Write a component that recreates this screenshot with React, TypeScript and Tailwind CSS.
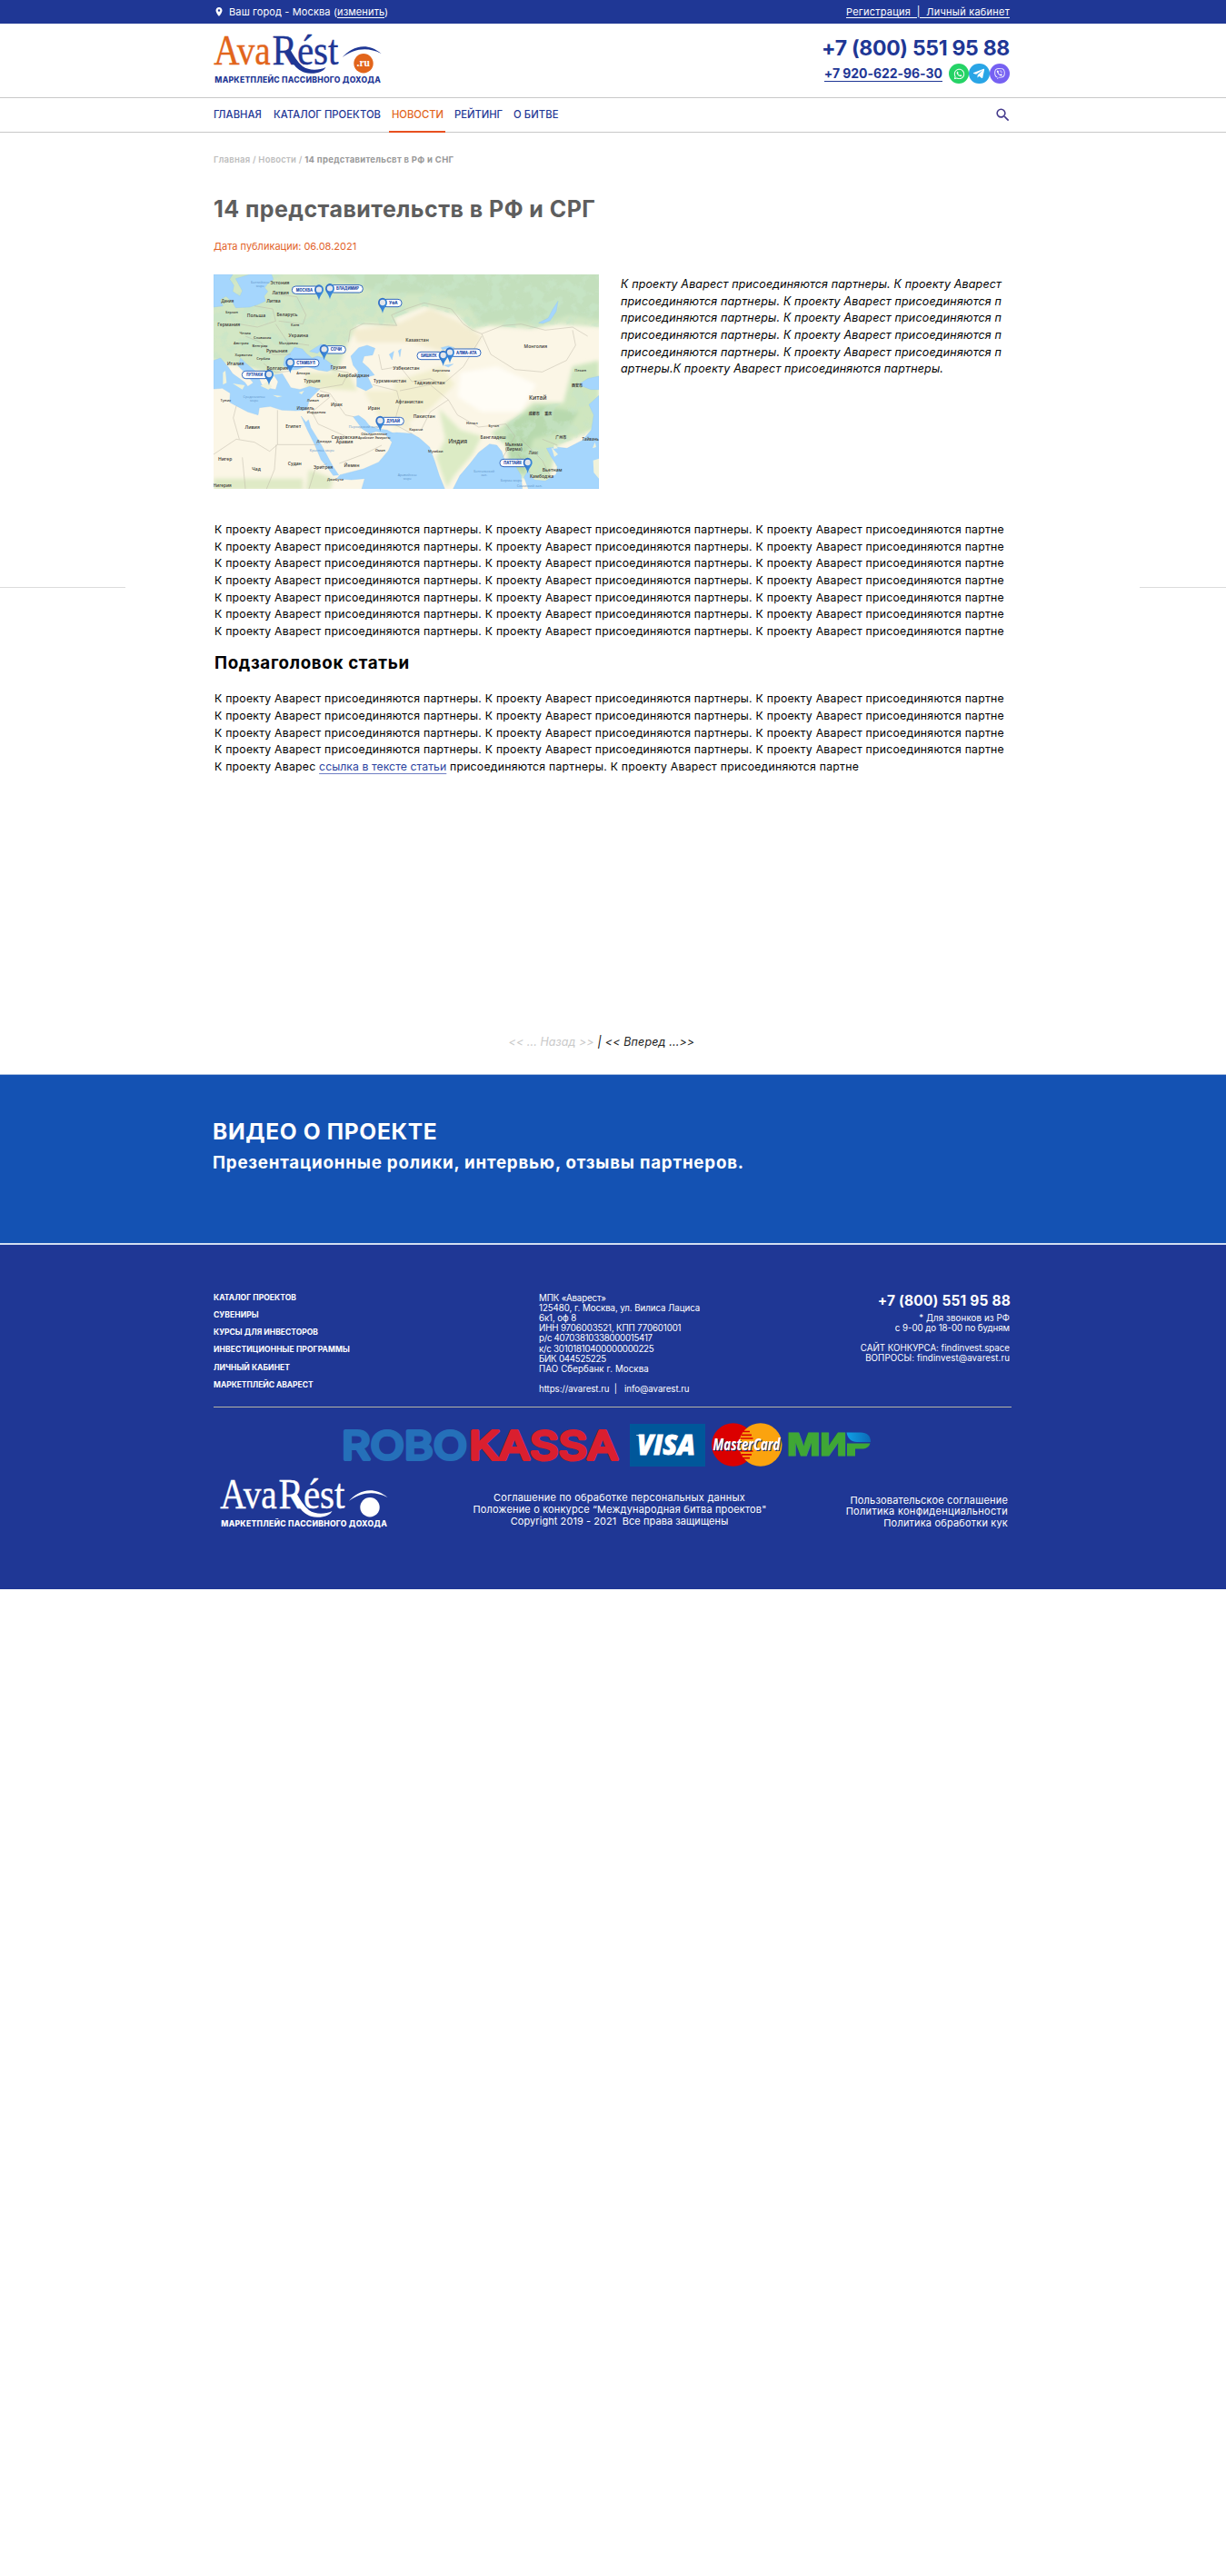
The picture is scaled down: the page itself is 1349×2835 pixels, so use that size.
import React from "react";
import { FaWhatsapp, FaTelegramPlane, FaViber } from "react-icons/fa";
import { MdLocationOn, MdSearch } from "react-icons/md";

function Logo({ mono = false }: { mono?: boolean }) {
  const warm = mono ? "#ffffff" : "#e2651b";
  const cool = mono ? "#ffffff" : "#1f3795";
  return (
    <svg width="190" height="62" viewBox="0 0 190 62" className="block shrink-0 overflow-visible">
      <g fontFamily="'Liberation Serif', serif" fontSize="47">
        <text x="3.2" y="36.7" fill={warm} stroke={warm} strokeWidth="0.4" textLength="62.5" lengthAdjust="spacingAndGlyphs">Ava</text>
        <text x="67.5" y="36.7" fill={cool} stroke={cool} strokeWidth="0.4" textLength="73" lengthAdjust="spacingAndGlyphs">Rést</text>
      </g>
      <path d="M83 21 C88 32 93 46.3 110 46.8 C118 47 124 44.5 126.5 40 C119 43.5 108 44 101 39 C95 34 91 27 87 20Z" fill={cool} />
      <path d="M144.7 28.9 C154 19 170 10.5 187.5 24.9 C172 17 158 19.5 144.7 28.9Z" fill={cool} />
      <circle cx="168" cy="35.7" r="10.7" fill={warm} />
      {!mono && (
        <text x="167.8" y="39" fill="#fff" fontFamily="'Liberation Serif', serif" fontWeight="700" fontSize="11.5" textAnchor="middle">.ru</text>
      )}
      <text x="4.3" y="56.7" fill={cool} fontFamily="Inter, sans-serif" fontWeight="800" fontSize="8.6" textLength="182.500" lengthAdjust="spacing">
        МАРКЕТПЛЕЙС ПАССИВНОГО ДОХОДА
      </text>
    </svg>
  );
}

type Pin = { x: number; y: number; edge: number; name: string };
const pins: Pin[] = [
  { x: 429, y: 383, edge: 538, name: "ВЛАДИМИР" },
  { x: 393, y: 387, edge: 304, name: "МОСКВА" },
  { x: 603, y: 430, edge: 666, name: "УФА" },
  { x: 410, y: 584, edge: 481, name: "СОЧИ" },
  { x: 298, y: 628, edge: 393, name: "СТАМБУЛ" },
  { x: 228, y: 667, edge: 139, name: "ЛУТРАКИ" },
  { x: 825, y: 594, edge: 927, name: "АЛМА-АТА" },
  { x: 803, y: 604, edge: 717, name: "БИШКЕК" },
  { x: 595, y: 820, edge: 673, name: "ДУБАЙ" },
  { x: 1082, y: 958, edge: 990, name: "ПАТТАЙЯ" },
];

type Label = [x: number, y: number, text: string, size?: number];
const places: Label[] = [
  [264, 369, "Эстония"], [266, 402, "Латвия"], [243, 429, "Литва"], [91, 430, "Дания", 13],
  [186, 478, "Польша"], [288, 473, "Беларусь"], [95, 507, "Германия"], [149, 535, "Чехия", 12],
  [206, 548, "Словакия", 12], [136, 566, "Австрия", 12], [198, 575, "Венгрия", 12], [325, 544, "Украина"],
  [292, 566, "Молдавия", 12], [254, 594, "Румыния"], [144, 605, "Хорватия", 12], [209, 619, "Сербия", 12],
  [117, 636, "Италия"], [256, 651, "Болгария"], [457, 648, "Грузия"], [507, 674, "Азербайджан"],
  [370, 693, "Турция"], [341, 666, "Анкара", 12], [85, 755, "Тунис", 12], [406, 742, "Сирия", 13],
  [373, 755, "Ливан", 12], [451, 771, "Ирак"], [348, 783, "Израиль", 13], [384, 796, "Иордания", 12],
  [574, 783, "Иран"], [173, 845, "Ливия"], [308, 844, "Египет"], [717, 557, "Казахстан"],
  [1108, 578, "Монголия"], [681, 650, "Узбекистан"], [796, 657, "Киргизия", 12], [627, 693, "Туркменистан"],
  [758, 699, "Таджикистан"], [691, 761, "Афганистан"], [740, 809, "Пакистан"], [1115, 750, "Китай", 19],
  [898, 830, "Непал", 12], [970, 839, "Бутан", 12], [851, 894, "Индия", 19], [968, 878, "Бангладеш"],
  [477, 878, "Саудовская"], [477, 894, "Аравия"], [575, 867, "Объединенные", 11], [575, 879, "Арабские Эмираты", 11],
  [595, 920, "Оман", 12], [501, 973, "Йемен"], [407, 979, "Эритрея"], [313, 967, "Судан"],
  [83, 952, "Нигер"], [186, 983, "Чад"], [74, 1038, "Нигерия", 14], [447, 1018, "Джибути", 12],
  [1036, 904, "Мьянма", 14], [1036, 919, "(Бирма)", 14], [1101, 931, "Лаос", 13], [1163, 987, "Вьетнам"],
  [1128, 1007, "Камбоджа"], [1289, 886, "Тайвань", 13], [778, 925, "Мумбаи", 12], [713, 851, "Карачи", 12],
  [410, 890, "Джидда", 12], [314, 508, "Киев", 11], [105, 464, "Берлин", 11],
  [1256, 657, "Пекин", 12], [1103, 801, "成都市", 12], [1150, 801, "重庆", 12], [1245, 708, "西安市", 12], [1192, 880, "广州市", 12],
];
const waters: Label[] = [
  [199, 365, "Балтийское", 11], [199, 377, "море", 11], [179, 745, "Средиземное", 11], [179, 757, "море", 11], [403, 922, "Красное море"],
  [545, 842, "Персидский залив"], [685, 1003, "Аравийское", 11], [685, 1015, "море", 11], [938, 991, "Бенгальский", 11], [938, 1003, "зал.", 11],
  [1028, 1021, "Бирма море"], [1088, 1037, "Сиамский зал."],
];

function OfficeMap() {
  return (
    <svg width="424" height="236" viewBox="45 336 1272 708" preserveAspectRatio="none" className="block shrink-0">
      <defs>
        <filter id="soft" x="-10%" y="-10%" width="120%" height="120%"><feGaussianBlur stdDeviation="7" /></filter>
        <filter id="relief" x="0" y="0" width="100%" height="100%">
          <feTurbulence type="fractalNoise" baseFrequency="0.022" numOctaves="5" seed="7" />
          <feColorMatrix values="0 0 0 0 0.58  0 0 0 0 0.78  0 0 0 0 0.58  0 6 0 0 -2.8" />
        </filter>
        <linearGradient id="pin" x1="0" y1="0" x2="1" y2="1">
          <stop offset="0" stopColor="#2f66bd" /><stop offset="1" stopColor="#3f9be8" />
        </linearGradient>
        <clipPath id="north"><path d="M45 336H1317V510L1180 500 1090 515 950 505 900 520 850 470 740 440 640 480 650 505 520 500 490 560 430 600 330 580 180 640 45 610Z" /></clipPath>
        <clipPath id="south"><path d="M1317 640 1230 660 1200 760 1100 770 1010 830 990 880 1060 1010 1180 1010V900L1317 850Z" /></clipPath>
      </defs>
      <rect x="45" y="336" width="1272" height="708" fill="#fbf6e6" />
      <g filter="url(#soft)">
        <path d="M20 320H1340V510L1180 500 1090 515 950 505 900 520 850 470 740 440 640 480 650 505 520 500 490 560 450 660 330 600 250 670 150 640 20 620Z" fill="#d3e7c5" />
        <path d="M330 320H1340V490L1220 470 1130 500 1010 490 930 500 880 430 780 400 600 400 450 350Z" fill="#c3dfbc" />
        <path d="M500 520 650 500 760 450 850 490 930 540 900 600 800 590 700 560 600 560 520 560Z" fill="#f3ecd0" />
        <path d="M1317 620 1230 640 1200 760 1100 760 1040 810 960 860 1010 900 1040 1000 1150 1020 1180 900 1317 840Z" fill="#cfe6bf" />
        <path d="M1120 770 1250 790 1210 850 1100 880 1070 1000 1020 960 1010 830Z" fill="#b8d9ae" />
        <path d="M790 780 860 850 930 870 900 930 840 1000 815 1040 780 940 810 880Z" fill="#dcebc5" />
        <path d="M360 980 440 1010 430 1050 350 1050Z M45 1010H340V1050H45Z" fill="#dfeac6" />
        <path d="M860 660 980 640 1110 700 1060 790 930 790 850 740Z" fill="#fffdf6" />
        <path d="M640 690 800 640 840 700 760 780 640 850Z" fill="#f2efcf" />
        <path d="M540 720 640 720 700 850 600 820Z" fill="#f3efd2" />
        <path d="M350 660 490 660 520 720 350 710Z" fill="#e9ecc8" />
      </g>
      <rect x="45" y="336" width="1272" height="330" filter="url(#relief)" clipPath="url(#north)" opacity=".7" />
      <rect x="960" y="620" width="357" height="400" filter="url(#relief)" clipPath="url(#south)" opacity=".6" />
      <g fill="#a5d6fd" stroke="#8fc6f2" strokeWidth="1">
        <path d="M45 336H108L98 352 112 372 108 392 132 408 140 390 118 350 165 336H236L242 352 222 368 214 380 224 392 212 408 216 424 190 436 164 444 118 446 108 428 86 408 66 420 76 440 45 444Z" />
        <path d="M280 610 302 592 312 577 338 582 352 598 370 612 388 606 408 612 436 634 440 648 420 656 390 652 352 640 320 650 292 652 276 636Z" />
        <path d="M362 590 400 566 416 572 388 596Z" />
        <path d="M45 620 68 612 92 640 108 664 148 692 158 706 176 694 152 664 126 638 134 612 150 628 186 658 204 700 226 712 250 716 258 690 244 668 272 664 288 690 300 710 330 716 362 706 396 714 380 730 362 748 352 784 316 786 270 784 232 772 196 776 192 800 158 790 120 770 98 758 100 728 74 712 45 714Z" />
        <path d="M498 606 524 578 552 570 578 580 570 602 542 606 536 626 558 646 576 668 554 674 570 708 548 720 518 706 518 674 522 656 506 636Z" />
        <path d="M625 600 640 590 634 618Z M655 588 664 582 660 608Z M796 578 820 572 840 578 800 584Z M806 636 836 632 820 642Z" />
        <path d="M334 804 350 824 358 816 366 842 392 884 412 920 440 972 458 998 440 1000 420 972 400 948 378 896 356 852Z" />
        <path d="M506 806 524 802 544 816 560 836 588 846 618 850 640 862 608 860 582 854 560 862 536 846Z" />
        <path d="M610 862 650 858 700 862 724 876 758 906 774 950 790 1000 808 1044H534L544 1010 500 1014 452 1010 462 998 540 978 590 956 622 918 634 890Z" />
        <path d="M836 1044 858 1000 892 960 920 924 956 896 980 900 996 920 1008 956 1040 966 1060 1000 1064 1044Z" />
        <path d="M1084 1044 1070 1006 1082 984 1104 1014 1140 1018 1176 996 1180 970 1158 936 1144 910 1174 906 1212 910 1262 884 1292 850 1300 800 1284 766 1317 736V1044Z" />
        <path d="M1250 700 1280 680 1317 672V716L1290 716Z" />
        <path d="M1118 496 1150 480 1164 452 1182 424 1176 458 1156 488 1132 498Z" />
      </g>
      <path d="M76 660 84 654 88 694 76 700Z M108 696 148 702 140 716Z M240 734 272 738 256 742Z M326 726 344 720 336 732Z M200 704 222 690 238 706 226 716Z M1160 906 1182 930 1170 938Z M1296 910 1304 890 1308 906Z M1298 950 1317 944V1010L1300 990Z M1170 898 1182 910 1166 912Z" fill="#f0f2da" />
      <g fill="none" stroke="#b9b3a4" strokeWidth="1.4">
        <path d="M490 560 496 520 540 498 650 505 632 470 680 450 740 430 830 450 870 500 900 520 930 532 1000 505 1060 500 1140 520 1230 510 1280 540" />
        <path d="M930 532 960 600 1040 650 1130 658 1210 620 1240 570 1230 520" />
        <path d="M590 600 600 650 660 640 700 690 760 680 800 700 870 640 930 540 M570 700 650 720 660 760 640 830 700 862" />
        <path d="M660 720 760 700 820 750 760 790 730 850 M820 750 850 800 920 840 1010 830 1040 870 1000 940" />
        <path d="M396 720 430 730 480 800 508 806 M430 740 370 790 390 830 480 870 M460 960 540 930 600 900 M256 784V898H392 M256 898 230 920 180 890 120 880 45 930" />
        <path d="M252 898 246 980 220 1044 M120 770 110 810 130 880 M140 940 150 1044 M360 1044 380 980 420 960" />
        <path d="M180 440 240 450 250 490 190 510 130 500 M240 400 320 410 350 470 340 500 260 490 M250 500 290 560 360 570 M150 540 200 560 240 600 300 600 M210 630 250 660 300 655 M380 715 470 700 490 660 430 650" />
        <path d="M1060 880 1090 910 1130 950 1160 1010 M1050 930 1090 990 M1130 880 1180 900" />
      </g>
      <g fontFamily="'Open Sans', 'Noto Sans CJK SC', sans-serif" textAnchor="middle">
        <g fill="#3c3a36" fontWeight="600">
          {places.map(([x, y, t, s]) => <text key={t + x + y} x={x} y={y} fontSize={s ?? 15}>{t}</text>)}
        </g>
        <g fill="#5f93c8">
          {waters.map(([x, y, t, s]) => <text key={t + x + y} x={x} y={y} fontSize={s ?? 12}>{t}</text>)}
        </g>
      </g>
      {pins.map((p) => {
        const right = p.edge > p.x;
        const left = Math.min(p.x, p.edge);
        const w = Math.abs(p.edge - p.x);
        return (
          <g key={p.name}>
            <rect x={left} y={p.y - 12} width={w} height="25" rx="12" fill="#fff" stroke="#2f66bd" strokeWidth="3" />
            <text x={right ? p.x + 21 : p.x - 21} y={p.y + 5} fontSize="13" fontWeight="800" fill="#1d4aa6" fontFamily="Inter, sans-serif"
              textAnchor={right ? "start" : "end"} textLength={w - 34} lengthAdjust="spacingAndGlyphs">{p.name}</text>
            <path d={`M${p.x - 15} ${p.y}a15 17 0 1 1 30 0c0 10-12 18-15 35c-3-17-15-25-15-35Z`} fill="url(#pin)" />
            <circle cx={p.x} cy={p.y - 1} r="9.5" fill="#e4e6ea" />
          </g>
        );
      })}
    </svg>
  );
}

function Payments() {
  return (
    <div className="flex h-12 items-center pl-[142px]">
      <svg width="305" height="48" viewBox="0 0 305 48" className="block">
        <g fontFamily="Inter, sans-serif" fontWeight="400" fontSize="43" strokeWidth="4" strokeLinejoin="round">
          <text x="-1" y="39.5" fill="#2570b9" stroke="#2570b9" textLength="138" lengthAdjust="spacingAndGlyphs">ROBO</text>
          <text x="139" y="39.5" fill="#da1f2f" stroke="#da1f2f" textLength="164" lengthAdjust="spacingAndGlyphs">KASSA</text>
        </g>
      </svg>
      <div className="ml-[11px] flex h-[47px] w-[83px] items-center justify-center bg-[#00579a]">
        <svg width="70" height="26" viewBox="0 0 70 26" className="overflow-visible">
          <text x="1" y="23.5" fill="#fff" stroke="#fff" strokeWidth="0.8" fontFamily="'Open Sans', sans-serif" fontStyle="italic" fontWeight="800" fontSize="30" textLength="64" lengthAdjust="spacingAndGlyphs">VISA</text>
          <path d="M0 2.2H7L9 8C6 4.5 3 3.2 0 2.8Z" fill="#fff" />
        </svg>
      </div>
      <svg width="78" height="48" viewBox="0 0 78 48" className="ml-[7px] block">
        <circle cx="23.7" cy="24" r="23.7" fill="#db0000" />
        <circle cx="53.8" cy="24" r="23.7" fill="#fba30e" />
        <g stroke="#db0000" strokeWidth="1.7">
          <path d="M35 9.5H42M33 13.3H44M32 17H45.5M32 31H45.5M33 34.8H44M35 38.6H42" />
        </g>
        <g fontFamily="'Open Sans', sans-serif" fontStyle="italic" fontWeight="700" fontSize="17">
          <text x="2.500" y="31" fill="#1c2f6e" textLength="74" lengthAdjust="spacingAndGlyphs" aria-hidden="true">MasterCard</text>
          <text x="1.5" y="29.8" fill="#fff" textLength="74" lengthAdjust="spacingAndGlyphs">MasterCard</text>
        </g>
      </svg>
      <svg width="92" height="48" viewBox="0 0 92 48" className="ml-[6px] block">
        <defs>
          <linearGradient id="mir"><stop offset="0" stopColor="#0fa0e6" /><stop offset="1" stopColor="#0c69b5" /></linearGradient>
        </defs>
        <text x="-1" y="36.3" fill="#3fa735" stroke="#3fa735" strokeWidth="1.2" fontFamily="Inter, sans-serif" fontWeight="800" fontSize="34" textLength="91" lengthAdjust="spacingAndGlyphs">МИР</text>
        <path d="M63.500 9H92V37H63.500Z" fill="#1f3795" />
        <path d="M64.500 10.500H80C87 10.500 91 14 91 21H76C70 21 65.500 17 64.500 10.500Z" fill="url(#mir)" />
        <path d="M65 22.500H90.500C89 26.500 86 28.500 81 28.500H74V36.500H65Z" fill="#3fa735" />
      </svg>
    </div>
  );
}

const line = "К проекту Аварест присоединяются партнеры. К проекту Аварест присоединяются партнеры. К проекту Аварест присоединяются партне";
const leadLine = "присоединяются партнеры. К проекту Аварест присоединяются п";

export default function App() {
  return (
    <div className="min-h-[2835px] w-[1349px] overflow-hidden bg-white font-[Inter,sans-serif] whitespace-pre text-black">
      <div className="h-[26px] bg-[#1f3795] text-[11px] leading-[26px] text-white">
        <div className="ml-[235px] flex w-[876px] items-center">
          <MdLocationOn size={12} className="mr-[5px]" />
          <span className="tracking-[0.127px]">Ваш город - Москва (<a className="underline underline-offset-2">изменить</a>)</span>
          <a className="ml-auto tracking-[0.229px] underline underline-offset-2">Регистрация  |  Личный кабинет</a>
        </div>
      </div>

      <header className="h-[82px] border-b border-[#c8c8c8]">
        <div className="ml-[232px] flex w-[879px] items-start justify-between">
          <div className="mt-2"><Logo /></div>
          <div className="mt-[10px] flex flex-col items-end text-[#1f3795]">
            <div className="text-[23px] leading-[34px] font-bold tracking-[-0.297px] word-spacing-[1px]">+7 (800) 551 95 88</div>
            <div className="flex h-[22px] items-center">
              <a className="mr-[7px] border-b border-[#1f3795] text-[14px] leading-[16px] font-bold tracking-[-0.055px]">+7 920-622-96-30</a>
              <span className="flex size-[22.4px] items-center justify-center rounded-full bg-[#25d366] text-white"><FaWhatsapp size={13} /></span>
              <span className="flex size-[22.4px] items-center justify-center rounded-full bg-[#29a5e6] text-white"><FaTelegramPlane size={14} /></span>
              <span className="flex size-[22.4px] items-center justify-center rounded-full bg-[#7661f2] text-white"><FaViber size={12} /></span>
            </div>
          </div>
        </div>
      </header>

      <nav className="h-[38px] border-b border-[#c8c8c8]">
        <div className="ml-[235px] flex h-[38px] w-[878px] items-start text-[11.25px] leading-[37px] font-medium text-[#1f3795]">
          <a className="w-[66px] tracking-[0.083px]">ГЛАВНАЯ</a>
          <a className="w-[127px] tracking-[0.037px]">КАТАЛОГ ПРОЕКТОВ</a>
          <a className="h-[38px] w-[62px] border-b-2 border-[#e8501f] pl-[3px] tracking-[-0.017px] text-[#e2651b]">НОВОСТИ</a>
          <a className="ml-[10px] w-[65px] tracking-[-0.038px]">РЕЙТИНГ</a>
          <a className="tracking-[0.083px]">О БИТВЕ</a>
          <MdSearch size={19} className="mt-[9px] ml-auto text-[#443a8c]" />
        </div>
      </nav>

      <div className="flex h-[1036px]">
        <div className="mt-[500px] h-px w-[138px] shrink-0 bg-[#dcdcdc]" />
        <main className="ml-[97px] flex w-[878px] shrink-0 flex-col">
          <div className="mt-[23px] text-[9.5px] leading-[14px] font-semibold text-[#bdbdbd]">
            <span className="tracking-[0.22px]">Главная / Новости / </span>
            <span className="font-bold tracking-[0.29px] text-[#999]">14 представительсвт в РФ и СНГ</span>
          </div>
          <h1 className="mt-[31px] text-[25px] leading-[32px] font-bold tracking-[0.45px] text-[#5e5e5e]">14 представительств в РФ и СРГ</h1>
          <div className="mt-[17px] text-[11px] leading-[16px] text-[#e2632a]">Дата публикации: 06.08.2021</div>
          <div className="mt-[23px] flex">
            <OfficeMap />
            <div className="ml-[24px] pt-[2px] text-[12.5px] leading-[18.67px] italic">
              <div className="tracking-[0.139px]">К проекту Аварест присоединяются партнеры. К проекту Аварест</div>
              {[0, 1, 2, 3].map((i) => <div key={i} className="tracking-[0.163px]">{leadLine}</div>)}
              <div className="tracking-[0.152px]">артнеры.К проекту Аварест присоединяются партнеры.</div>
            </div>
          </div>
          <div className="mt-[36px] ml-px text-[12.25px] leading-[18.67px] tracking-[0.237px]">
            {[0, 1, 2, 3, 4, 5, 6].map((i) => <div key={i}>{line}</div>)}
          </div>
          <h2 className="mt-[13.5px] ml-px text-[18.75px] leading-[24px] font-bold tracking-[0.65px]">Подзаголовок статьи</h2>
          <div className="mt-[18px] ml-px text-[12.25px] leading-[18.67px] tracking-[0.237px]">
            {[0, 1, 2, 3].map((i) => <div key={i}>{line}</div>)}
            <div>К проекту Аварес <a className="tracking-[0.05px] text-[#2b43a0] underline decoration-[#6f7fc4] underline-offset-[3px]">ссылка в тексте статьи</a> присоединяются партнеры. К проекту Аварест присоединяются партне</div>
          </div>
          <div className="mt-auto mb-[26px] ml-[324.6px] text-[12.5px] leading-[18px] text-[#222] italic">
            <span className="tracking-[0.059px] text-[#c9c9c9]">{"<< ... Назад >>"}</span>
            <span className="px-[4px] text-black">|</span>
            <span className="tracking-[0.142px]">{"<< Вперед ...>>"}</span>
          </div>
        </main>
        <div className="mt-[500px] ml-[141px] h-px w-[95px] shrink-0 bg-[#dcdcdc]" />
      </div>

      <section className="h-[186px] border-t border-[#a9bfe0] bg-[#1452b3] pt-[46px] text-white">
        <div className="ml-[234px]">
          <h2 className="text-[24.5px] leading-[32px] font-bold tracking-[0.68px]">ВИДЕО О ПРОЕКТЕ</h2>
          <p className="mt-[7px] text-[18.75px] leading-[24px] font-bold tracking-[0.78px]">Презентационные ролики, интервью, отзывы партнеров.</p>
        </div>
      </section>

      <footer className="h-[381px] border-t-2 border-[#d3dff2] bg-[#1f3795] pt-[48px] text-white">
        <div className="ml-[235px] w-[878px]">
          <div className="flex h-[130px] text-[9.75px] leading-[11.2px]">
            <div className="w-[358px] pt-[0.7px] text-[8.5px] leading-[19.2px] font-bold">
              <div className="tracking-[0.055px]">КАТАЛОГ ПРОЕКТОВ</div>
              <div className="tracking-[0.06px]">СУВЕНИРЫ</div>
              <div className="tracking-[0.016px]">КУРСЫ ДЛЯ ИНВЕСТОРОВ</div>
              <div className="tracking-[0.107px]">ИНВЕСТИЦИОННЫЕ ПРОГРАММЫ</div>
              <div className="tracking-[0.062px]">ЛИЧНЫЙ КАБИНЕТ</div>
              <div className="tracking-[-0.039px]">МАРКЕТПЛЕЙС АВАРЕСТ</div>
            </div>
            <div className="pt-[4.5px]">
              <div className="tracking-[-0.155px]">МПК «Аварест»</div>
              <div className="tracking-[-0.079px]">125480, г. Москва, ул. Вилиса Лациса</div>
              <div className="tracking-[-0.123px]">6к1, оф 8</div>
              <div className="tracking-[-0.163px]">ИНН 9706003521, КПП 770601001</div>
              <div className="tracking-[-0.296px]">р/с 40703810338000015417</div>
              <div className="tracking-[-0.266px]">к/с 30101810400000000225</div>
              <div className="tracking-[-0.264px]">БИК 044525225</div>
              <div className="tracking-[0.08px]">ПАО Сбербанк г. Москва</div>
              <div className="mt-[11.2px] tracking-[-0.077px]">https://avarest.ru  |   info@avarest.ru</div>
            </div>
            <div className="ml-auto pt-[3.5px] pr-[2px] text-right">
              <div className="-mr-px text-[15.5px] leading-[20px] font-bold tracking-[0.178px]">+7 (800) 551 95 88</div>
              <div className="mt-[3px] tracking-[0.09px]">* Для звонков из РФ</div>
              <div className="tracking-[-0.077px]">с 9-00 до 18-00 по будням</div>
              <div className="mt-[11.2px] tracking-[-0.022px]">САЙТ КОНКУРСА: findinvest.space</div>
              <div className="tracking-[0.08px]">ВОПРОСЫ: findinvest@avarest.ru</div>
            </div>
          </div>
          <div className="mb-[17px] h-px bg-[#b5b5a5]" />
          <Payments />
          <div className="mt-[9px] ml-[3.5px] flex items-start text-[11px] leading-[13px]">
            <Logo mono />
            <div className="mt-[18.5px] ml-[92px] w-[322px] text-center">
              <div className="tracking-[0.221px]">Соглашение по обработке персональных данных</div>
              <div className="tracking-[0.16px]">Положение о конкурсе “Международная битва проектов"</div>
              <div className="tracking-[0.067px]">Copyright 2019 - 2021  Все права защищены</div>
            </div>
            <div className="mt-[21.5px] mr-[4px] ml-auto text-right leading-[12.6px]">
              <div className="tracking-[0.181px]">Пользовательское соглашение</div>
              <div className="tracking-[0.3px]">Политика конфиденциальности</div>
              <div className="tracking-[0.177px]">Политика обработки кук</div>
            </div>
          </div>
        </div>
      </footer>
    </div>
  );
}
